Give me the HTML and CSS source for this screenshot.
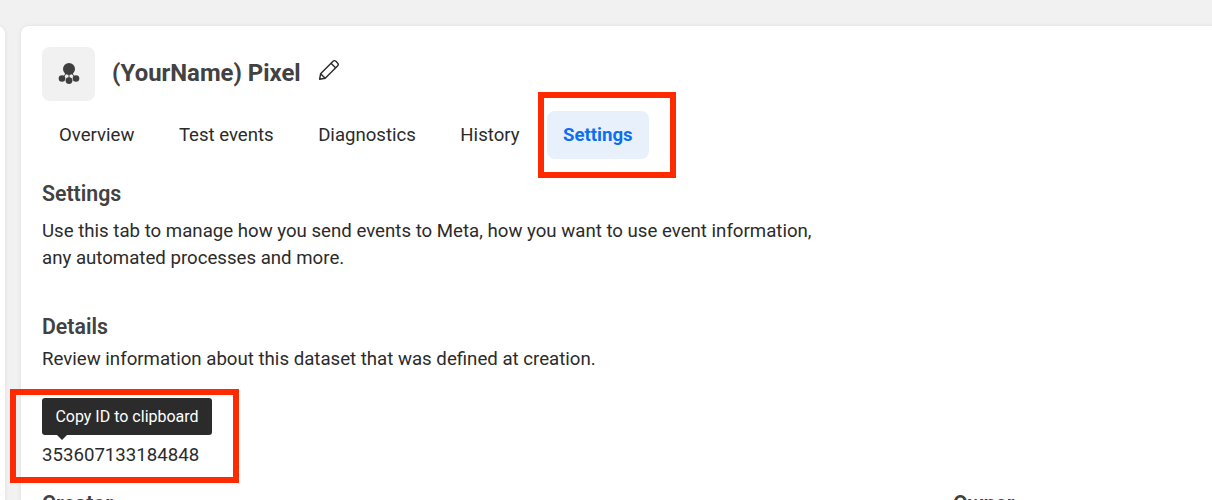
FILE: index.html
```html
<!DOCTYPE html>
<html lang="en">
<head>
<meta charset="utf-8">
<title>Pixel settings</title>
<link rel="stylesheet" href="styles.css">
</head>
<body>
<div class="page">
  <aside class="side"></aside>
  <main class="card">
    <header class="head">
      <div class="avatar">
        <svg width="24" height="24" viewBox="0 0 24 24" fill="#3f3f3f">
          <circle cx="12" cy="7" r="6"/>
          <circle cx="5" cy="16.5" r="3.3"/>
          <circle cx="19" cy="16.5" r="3.3"/>
          <circle cx="12" cy="18.6" r="3.4"/>
          <path d="M11.5 12h1v4h-1z"/>
          <path d="M6.5 14l2.6-3 .7.6-2.6 3zM17.5 14l-2.6-3-.7.6 2.6 3z"/>
        </svg>
      </div>
      <h1 class="title">(YourName) Pixel</h1>
      <svg class="pencil" width="22" height="22" viewBox="0 0 22 22" fill="none" stroke="#2b2b2b" stroke-width="1.4" stroke-linejoin="round">
        <path d="M1.6 20.2l1-5.4L14.8 2.4c.9-.9 2.2-.9 3.1-.1l1.6 1.6c.9.9.9 2.2 0 3.1L7.2 19.2z"/>
        <path d="M13 4.2l4.8 4.8"/>
        <path d="M2.6 14.8l4.6 4.4"/>
      </svg>
    </header>
    <nav class="tabs">
      <a class="tab">Overview</a>
      <a class="tab">Test events</a>
      <a class="tab">Diagnostics</a>
      <a class="tab">History</a>
      <a class="tab active">Settings</a>
    </nav>
    <section class="intro">
      <h2 class="heading">Settings</h2>
      <p class="text">Use this tab to manage how you send events to Meta, how you want to use event information,<br>any automated processes and more.</p>
    </section>
    <section class="details">
      <h2 class="heading">Details</h2>
      <p class="text">Review information about this dataset that was defined at creation.</p>
      <div class="id-block">
        <div class="tooltip">Copy ID to clipboard</div>
        <div class="id">353607133184848</div>
      </div>
      <div class="meta">
        <h3 class="heading">Creator</h3>
        <h3 class="heading">Owner</h3>
      </div>
    </section>
  </main>
</div>
<div class="mark mark-tab"></div>
<div class="mark mark-id"></div>
</body>
</html>
```

FILE: styles.css
```css
* { box-sizing: border-box; }
html, body { margin: 0; height: 100%; overflow: hidden; }
body {
  background: #f1f1f1;
  font-family: Roboto, "Liberation Sans", sans-serif;
  color: #1f1f1f;
}
.page {
  display: flex;
  gap: 16px;
  padding-top: 26px;
  height: 500px;
  margin-left: -20px;
  width: 1244px;
}
.side, .card {
  background: #fff;
  box-shadow: 0 0 4px rgba(0, 0, 0, 0.08);
  border-radius: 8px;
}
.side { width: 25px; height: 600px; }
.card {
  flex: 1;
  height: 600px;
  padding: 21px 21px 0;
}
.head { display: flex; align-items: center; height: 54px; }
.avatar {
  width: 53px;
  height: 54px;
  border-radius: 8px;
  background: #f1f1f1;
  display: flex;
  align-items: center;
  justify-content: center;
}
.title {
  margin: -2px 17px 0 17px;
  font-size: 23.9px;
  font-weight: 700;
  color: #424242;
}
.pencil { margin-top: -8px; }
.tabs { display: flex; gap: 12.5px; margin-top: 10px; height: 48px; }
.tab {
  display: flex;
  align-items: center;
  padding: 0 16px;
  border-radius: 8px;
  font-size: 18.6px;
  color: #2b2b2b;
}
.tab:first-child { margin-left: 1px; }
.tab.active {
  background: #e7f0fb;
  color: #0b6ff0;
  font-weight: 700;
  margin-left: -1px;
}
.intro { margin-top: 21px; }
.heading {
  margin: 0;
  font-size: 21.3px;
  line-height: 27px;
  font-weight: 600;
  color: #424242;
}
.text {
  margin: 11px 0 0;
  font-size: 18.65px;
  line-height: 27px;
  color: #2b2b2b;
}
.details { margin-top: 41px; }
.details .text { margin-top: 6px; }
.id-block { margin-top: 25px; }
.tooltip {
  position: relative;
  width: 170px;
  height: 37px;
  background: #2b2b2b;
  border-radius: 3px;
  color: #fff;
  font-size: 16px;
  line-height: 38px;
  text-align: center;
}
.tooltip::after {
  content: "";
  position: absolute;
  left: 15px;
  top: 37px;
  border: 5px solid transparent;
  border-top-color: #2b2b2b;
}
.id {
  margin-top: 8px;
  font-size: 18.65px;
  line-height: 24px;
  color: #2b2b2b;
}
.meta {
  display: grid;
  grid-template-columns: 911px 1fr;
  margin-top: 23px;
}
.mark {
  position: absolute;
  border: 6px solid #ff2a00;
}
.mark-tab { left: 538px; top: 92px; width: 138px; height: 86px; }
.mark-id { left: 10px; top: 389px; width: 229px; height: 94px; }
```
